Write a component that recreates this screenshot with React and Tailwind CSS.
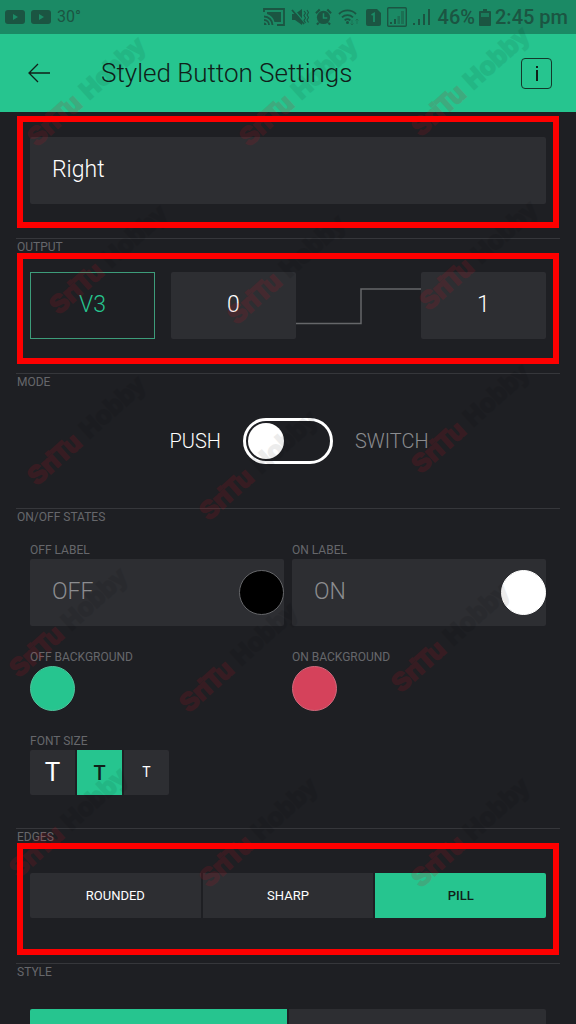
const watermarks = [
  [37, 147], [249, 147], [421, 137],
  [59, 315], [237, 325], [429, 311],
  [37, 486], [209, 521], [421, 474],
  [19, 678], [189, 713], [401, 693],
  [19, 878], [209, 888], [421, 888],
];

function Watermark() {
  return (
    <svg aria-hidden="true" className="pointer-events-none absolute inset-0 z-10 h-full w-full">
      {watermarks.map(([x, y]) => (
        <g key={`${x}-${y}`} transform={`translate(${x} ${y}) rotate(-42)`} className="font-['Liberation_Sans',sans-serif] text-[25px] font-bold" strokeWidth="2">
          <text fill="#d0101e" stroke="#d0101e" opacity="0.14">SriTu</text>
          <text x="70" fill="#000" stroke="#000" opacity="0.07">Hobby</text>
        </g>
      ))}
    </svg>
  );
}

function YoutubeIcon() {
  return (
    <svg viewBox="0 0 20 14" className="h-[14px] w-5" aria-hidden="true">
      <rect width="20" height="14" rx="3" fill="#1b5542" />
      <path d="M8 4l5 3-5 3z" fill="#1b8a65" />
    </svg>
  );
}

function StatusIcons() {
  return (
    <div className="flex items-center gap-[6px]" aria-hidden="true">
      <svg viewBox="0 0 22 18" className="h-[18px] w-[22px]" fill="none" stroke="currentColor" strokeWidth="1.800">
        <path d="M1 4V1h20v16h-7" />
        <path d="M1 8.500a8.500 8.500 0 0 1 8.500 8.500M1 12a5 5 0 0 1 5 5" />
        <path d="M1 14.500a2.500 2.500 0 0 1 2.500 2.500H1z" fill="currentColor" stroke="none" />
        <path d="M4 4h14v10h-6.500A11 11 0 0 0 4 6z" fill="currentColor" stroke="none" />
      </svg>
      <svg viewBox="0 0 18 18" className="h-[18px] w-[18px]" fill="currentColor">
        <path d="M1 6h3l7-5v16l-7-5H1z" />
        <path d="M2 1l12 14" stroke="#1b8a65" strokeWidth="1.500" />
        <path d="M1 2l12 14" stroke="currentColor" strokeWidth="1.800" />
        <path d="M13 3l1.500 2L13 7.500l1.500 2.500L13 12.500l1.500 2.500M16 2l1.500 2.500L16 7l1.500 2.500L16 12l1.500 2.500" fill="none" stroke="currentColor" strokeWidth="1.100" />
      </svg>
      <svg viewBox="0 0 18 18" className="h-[18px] w-[17px]" fill="currentColor">
        <circle cx="9" cy="9.500" r="7" />
        <path d="M1 5l4-4M17 5l-4-4M4 15l-2 2M14 15l2 2" stroke="currentColor" strokeWidth="2.200" />
        <path d="M9 5v5h4" fill="none" stroke="#1b8a65" strokeWidth="1.600" />
      </svg>
      <svg viewBox="0 0 22 18" className="h-[18px] w-[22px]" fill="none" stroke="currentColor" strokeWidth="1.800">
        <path d="M1 6a12 12 0 0 1 17 0M4 9.300a8 8 0 0 1 11 0M6.700 12.300a4 4 0 0 1 5.600 0" />
        <circle cx="9.500" cy="14.500" r="1.500" fill="currentColor" stroke="none" />
        <path d="M14 12v5M12.500 15.500L14 17l1.500-1.500M19 16v-5M17.500 12.500L19 11l1.500 1.500" strokeWidth="1" opacity="0.4" />
      </svg>
      <svg viewBox="0 0 15 17" className="h-[17px] w-[15px]" fill="currentColor">
        <path d="M2 0h9l4 4v11a2 2 0 0 1-2 2H2a2 2 0 0 1-2-2V2a2 2 0 0 1 2-2z" />
        <path d="M5.500 6l2.500-1.500V13" fill="none" stroke="#1b8a65" strokeWidth="1.800" />
      </svg>
      <svg viewBox="0 0 20 20" className="h-5 w-5" fill="currentColor">
        <rect x="0.700" y="0.700" width="18.600" height="18.600" rx="1" fill="none" stroke="currentColor" strokeWidth="1.400" />
        <path d="M3 15h2v2H3zM7 12h2v5H7z" />
        <path d="M10.500 9h2.500v8h-2.500zM14 4h3v13h-3z" opacity="0.5" />
      </svg>
      <svg viewBox="0 0 17 17" className="h-[17px] w-[17px]" fill="currentColor">
        <path d="M0 14h2v2H0zM5 10h2v6H5zM10 5h2v11h-2zM15 0h2v16h-2z" />
      </svg>
    </div>
  );
}

function StatusBar() {
  return (
    <div className="flex h-[34px] shrink-0 items-center justify-between bg-[#1b8a65] pr-2 pl-[5px] text-[#1b5542]">
      <div className="flex items-center gap-[6px]">
        <YoutubeIcon />
        <YoutubeIcon />
        <span className="text-[16px] leading-5">30°</span>
      </div>
      <div className="flex items-center gap-2">
        <StatusIcons />
        <span className="flex items-center gap-1 text-[20px] leading-6 font-medium">
          46%
          <svg viewBox="0 0 12 17" className="h-[17px] w-3" fill="currentColor" aria-hidden="true">
            <path d="M4 0h4v2h3a1 1 0 0 1 1 1v13a1 1 0 0 1-1 1H1a1 1 0 0 1-1-1V3a1 1 0 0 1 1-1h3z" />
            <path d="M2 4h8v4H2z" fill="#1b8a65" opacity="0.7" />
          </svg>
          2:45 pm
        </span>
      </div>
    </div>
  );
}

function Header() {
  return (
    <header className="flex h-[78px] shrink-0 items-center bg-[#26c58f] pr-6 pl-7 text-[#102019]">
      <button type="button" aria-label="Back" className="mr-[51px]">
        <svg viewBox="0 0 22 20" className="h-5 w-[22px]" fill="none" stroke="currentColor" strokeWidth="1.300" aria-hidden="true">
          <path d="M22 10H1M10 1L1 10l9 9" />
        </svg>
      </button>
      <h1 className="flex-1 text-[26px] leading-8 font-light whitespace-nowrap">Styled Button Settings</h1>
      <button type="button" aria-label="Information" className="flex size-[31px] items-center justify-center rounded border border-[#14382b]">
        <svg viewBox="0 0 4 17" className="h-[17px] w-1" fill="currentColor" aria-hidden="true">
          <path d="M1 1h2v2H1zM1 5h2v11H1z" />
        </svg>
      </button>
    </header>
  );
}

function Frame({ className }) {
  return <div aria-hidden="true" className={`pointer-events-none absolute inset-x-px bottom-0 z-20 border-[6px] border-[#fe0000] ${className}`} />;
}

function Section({ title, children }) {
  return (
    <section className="border-t border-[#36373b]">
      <h2 className="pl-px text-[12px] leading-4 text-[#66676b]">{title}</h2>
      {children}
    </section>
  );
}

const field = "h-[67px] w-full min-w-0 rounded-xs bg-[#2d2e32] pb-[2px] text-[23px] font-light text-white outline-none";

function LabelField({ id, label, value, swatch }) {
  return (
    <div>
      <label htmlFor={id} className="block pb-px text-[12px] leading-4 text-[#66676b]">{label}</label>
      <div className="flex h-[67px] items-center rounded-xs bg-[#2d2e32]">
        <input id={id} placeholder={value} className="h-full w-full min-w-0 flex-1 bg-transparent pb-[2px] pl-[22px] text-[23px] font-light outline-none placeholder:text-[#8b8c8f]" />
        <button type="button" aria-label={`${label} color`} className={`size-[45px] shrink-0 rounded-full border ${swatch}`} />
      </div>
    </div>
  );
}

function Swatch({ label, color }) {
  return (
    <div>
      <p className="pb-px text-[12px] leading-4 text-[#66676b]">{label}</p>
      <button type="button" aria-label={label} className={`block size-[45px] rounded-full border ${color}`} />
    </div>
  );
}

function Segments({ items, active }) {
  return (
    <div className="flex gap-[2px] overflow-hidden rounded-xs">
      {items.map((item) => (
        <button
          key={item}
          type="button"
          aria-pressed={item === active}
          className={`h-[45px] flex-1 text-[13px] ${item === active ? "bg-[#26c58f] font-medium text-[#102019]" : "bg-[#2d2e32] font-normal text-white"}`}
        >
          {item}
        </button>
      ))}
    </div>
  );
}

export default function App() {
  return (
    <div className="relative flex h-dvh flex-col overflow-hidden bg-[#1e1f23] font-['Roboto',sans-serif]">
      <StatusBar />
      <Header />
      <main className="min-h-0 flex-1 overflow-y-auto px-4 pt-1 [scrollbar-width:none]">
        <div className="relative mb-[10px] px-[14px] pt-[21px] pb-6">
          <input aria-label="Name" defaultValue="Right" className={`${field} block px-[22px]`} />
          <Frame className="top-0" />
        </div>

        <Section title="OUTPUT">
          <div className="relative mb-[9px] flex px-[14px] pt-[17px] pb-[25px]">
            <button type="button" className="mr-4 h-[67px] min-w-0 flex-1 text-[23px] font-light text-[#26c58f] ring-1 ring-[#3d9c7a] ring-inset">V3</button>
            <input aria-label="Low value" defaultValue="0" className={`${field} flex-1 text-center`} />
            <svg viewBox="0 0 125 67" preserveAspectRatio="none" className="h-[67px] min-w-0 flex-1" fill="none" stroke="#66676a" strokeWidth="1.500" aria-hidden="true">
              <path d="M0 51.500H65V17H125" />
            </svg>
            <input aria-label="High value" defaultValue="1" className={`${field} flex-1 text-center`} />
            <Frame className="-top-0.5" />
          </div>
        </Section>

        <Section title="MODE">
          <label className="mt-[28px] mb-[44px] grid grid-cols-[1fr_auto_1fr] items-center gap-[22px] text-[20px] leading-6 font-light">
            <span className="text-right text-white">PUSH</span>
            <input
              type="checkbox"
              role="switch"
              aria-label="Switch mode"
              className="flex h-[46px] w-[90px] appearance-none items-center rounded-full border-[3px] border-white pl-[2px] before:size-9 before:rounded-full before:bg-white checked:justify-end"
            />
            <span className="text-[#8b8c8f]">SWITCH</span>
          </label>
        </Section>

        <Section title="ON/OFF STATES">
          <div className="px-[14px] pt-[17px] pb-[33px]">
            <div className="grid grid-cols-2 gap-x-2 gap-y-[23px]">
              <LabelField id="off-label" label="OFF LABEL" value="OFF" swatch="border-[#66676a] bg-black" />
              <LabelField id="on-label" label="ON LABEL" value="ON" swatch="border-white bg-white" />
              <Swatch label="OFF BACKGROUND" color="border-[#4fc49c] bg-[#26c58f]" />
              <Swatch label="ON BACKGROUND" color="border-[#d0697c] bg-[#d5425b]" />
            </div>
            <p className="mt-[22px] pb-px text-[12px] leading-4 text-[#66676b]">FONT SIZE</p>
            <div className="flex gap-[2px]">
              <button type="button" aria-label="Large" className="size-[45px] rounded-l-xs bg-[#2d2e32] text-[26px] text-white">T</button>
              <button type="button" aria-label="Medium" aria-pressed="true" className="size-[45px] bg-[#26c58f] text-[20px] font-medium text-[#102019]">T</button>
              <button type="button" aria-label="Small" className="size-[45px] rounded-r-xs bg-[#2d2e32] text-[14px] text-white">T</button>
            </div>
          </div>
        </Section>

        <Section title="EDGES">
          <div className="relative mb-2 px-[14px] pt-[28px] pb-[37px]">
            <Segments items={["ROUNDED", "SHARP", "PILL"]} active="PILL" />
            <Frame className="-top-0.5" />
          </div>
        </Section>

        <Section title="STYLE">
          <div className="px-[14px] pt-[29px]">
            <div className="flex gap-[2px] overflow-hidden rounded-xs">
              <button type="button" aria-label="Solid" aria-pressed="true" className="h-[45px] flex-1 bg-[#26c58f]" />
              <button type="button" aria-label="Outline" className="h-[45px] flex-1 bg-[#2d2e32]" />
            </div>
          </div>
        </Section>
      </main>
      <Watermark />
    </div>
  );
}
